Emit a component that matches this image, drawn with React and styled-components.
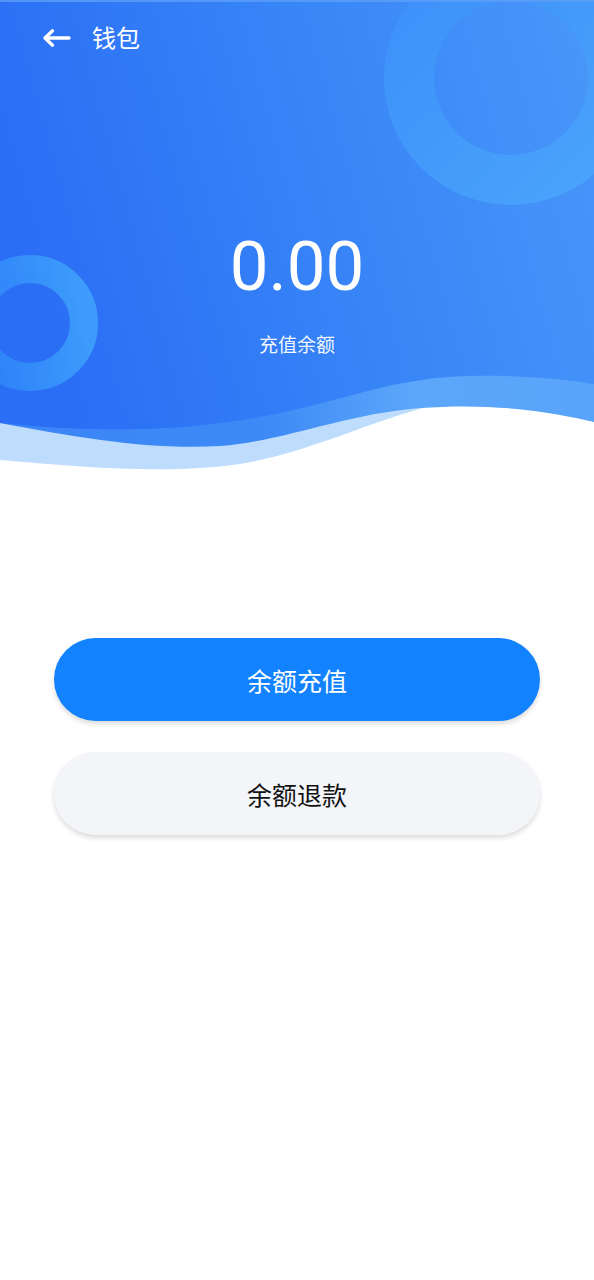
import React from "react";
import styled, { createGlobalStyle } from "styled-components";

const Global = createGlobalStyle`
  html, body { margin: 0; padding: 0; background: #ffffff; }
  body { font-family: Roboto, "Noto Sans CJK SC", "Noto Sans", sans-serif; }
  * { box-sizing: border-box; }
`;

const Page = styled.div`
  width: 594px;
  min-height: 1280px;
  background: #ffffff;
  display: flex;
  flex-direction: column;
`;

const Header = styled.header`
  position: relative;
  height: 480px;
  display: flex;
  flex-direction: column;
  color: #ffffff;
`;

const HeaderArt = styled.svg`
  position: absolute;
  inset: 0;
  width: 594px;
  height: 480px;
  z-index: 0;
`;

const TopBar = styled.div`
  position: relative;
  z-index: 1;
  height: 76px;
  display: flex;
  align-items: center;
  gap: 21px;
  padding-left: 42px;
`;

const BackButton = styled.button`
  border: 0;
  background: transparent;
  padding: 0;
  display: flex;
  align-items: center;
  cursor: pointer;
`;

const Title = styled.h1`
  margin: 0 0 2px;
  font-size: 24px;
  font-weight: 400;
  line-height: 1;
  font-family: "Noto Sans CJK SC", sans-serif;
`;

const Balance = styled.div`
  position: relative;
  z-index: 1;
  display: flex;
  flex-direction: column;
  align-items: center;
  margin-top: 147px;
`;

const Amount = styled.div`
  font-family: Roboto, sans-serif;
  font-size: 69px;
  font-weight: 400;
  line-height: 88px;
`;

const AmountLabel = styled.div`
  margin-top: 21px;
  font-family: "Noto Sans CJK SC", sans-serif;
  font-size: 19px;
  line-height: 24px;
  color: rgba(255, 255, 255, 0.95);
`;

const Actions = styled.div`
  display: flex;
  flex-direction: column;
  gap: 31px;
  padding: 158px 54px 0;
`;

const ActionButton = styled.button`
  height: 83px;
  width: 100%;
  border: 0;
  border-radius: 42px;
  background: ${(p) => (p.$primary ? "#1282fe" : "#f4f5f9")};
  color: ${(p) => (p.$primary ? "#ffffff" : "#111111")};
  font-family: "Noto Sans CJK SC", sans-serif;
  font-size: 25px;
  font-weight: 400;
  box-shadow: 0 3px 5px rgba(0, 0, 0, 0.14);
  cursor: pointer;
`;

function Art() {
  return (
    <HeaderArt viewBox="0 0 594 480" preserveAspectRatio="none">
      <defs>
        <linearGradient id="bodyG" x1="0" y1="0.35" x2="1" y2="0.15">
          <stop offset="0" stopColor="#2a6ef5" />
          <stop offset="0.5" stopColor="#3784f7" />
          <stop offset="1" stopColor="#4896f9" />
        </linearGradient>
        <linearGradient id="midG" x1="0" y1="0" x2="1" y2="0">
          <stop offset="0" stopColor="#3a85f6" />
          <stop offset="0.45" stopColor="#3d8af6" />
          <stop offset="0.7" stopColor="#5ca7fa" />
          <stop offset="1" stopColor="#58a4fa" />
        </linearGradient>
        <linearGradient id="bigRing" x1="0" y1="0" x2="1" y2="1">
          <stop offset="0" stopColor="#3d90f9" />
          <stop offset="1" stopColor="#4aa4fb" />
        </linearGradient>
        <linearGradient id="smallRing" x1="0" y1="0.5" x2="1" y2="0.3">
          <stop offset="0" stopColor="#2d80f8" />
          <stop offset="1" stopColor="#3d9cfb" />
        </linearGradient>
      </defs>
      <path
        d="M0,460 C90,468 170,474 240,464 C310,452 360,425 430,406 L594,398 V0 H0 Z"
        fill="#bedcfb"
      />
      <path
        d="M0,423 C80,438 150,450 220,446 C290,440 340,415 420,408 C500,402 560,414 594,422 V0 H0 Z"
        fill="url(#midG)"
      />
      <path
        d="M0,423 C100,434 200,432 294,410 C370,392 400,378 470,376 C530,375 570,380 594,384 V0 H0 Z"
        fill="url(#bodyG)"
      />
      <circle cx="511" cy="78" r="102" fill="none" stroke="url(#bigRing)" strokeWidth="50" />
      <circle cx="30" cy="323" r="54" fill="none" stroke="url(#smallRing)" strokeWidth="28" />
      <rect x="0" y="0" width="594" height="2" fill="#5c9ff8" opacity="0.8" />
    </HeaderArt>
  );
}

function BackArrow() {
  return (
    <svg width="29" height="18" viewBox="0 0 29 18" fill="none">
      <path
        d="M27 9 H3 M10.5 1.8 L3 9 L10.5 16.2"
        stroke="#ffffff"
        strokeWidth="3.3"
        strokeLinecap="round"
        strokeLinejoin="round"
      />
    </svg>
  );
}

export default function App() {
  return (
    <>
      <Global />
      <Page>
        <Header>
          <Art />
          <TopBar>
            <BackButton aria-label="返回">
              <BackArrow />
            </BackButton>
            <Title>钱包</Title>
          </TopBar>
          <Balance>
            <Amount>0.00</Amount>
            <AmountLabel>充值余额</AmountLabel>
          </Balance>
        </Header>
        <Actions>
          <ActionButton $primary>余额充值</ActionButton>
          <ActionButton>余额退款</ActionButton>
        </Actions>
      </Page>
    </>
  );
}
